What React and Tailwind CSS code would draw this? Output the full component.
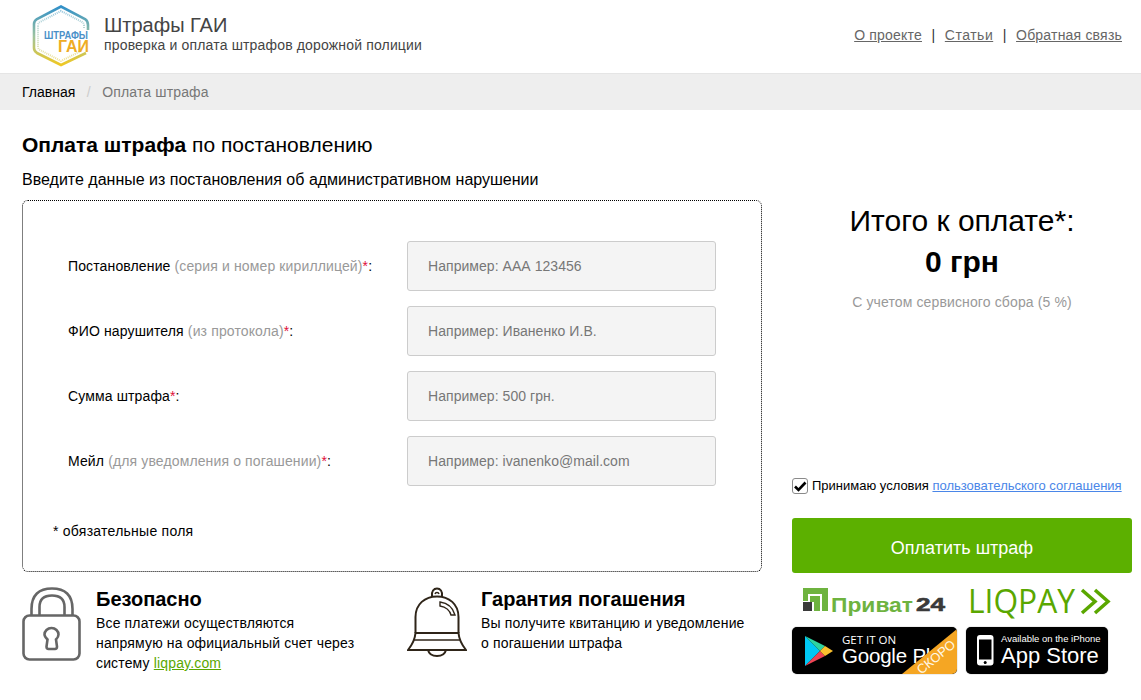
import React from 'react';

const fields = [
  { label: 'Постановление', hint: ' (серия и номер кириллицей)', ph: 'Например: ААА 123456' },
  { label: 'ФИО нарушителя', hint: ' (из протокола)', ph: 'Например: Иваненко И.В.' },
  { label: 'Сумма штрафа', hint: '', ph: 'Например: 500 грн.' },
  { label: 'Мейл', hint: ' (для уведомления о погашении)', ph: 'Например: ivanenko@mail.com' },
];

const Logo = () => (
  <svg width="60" height="64" viewBox="0 0 60 64" className="shrink-0">
    <defs>
      <linearGradient id="hex" gradientUnits="userSpaceOnUse" x1="0" y1="2" x2="0" y2="62">
        <stop offset="0" stopColor="#2f8fc9" />
        <stop offset="0.5" stopColor="#9cc3a0" />
        <stop offset="1" stopColor="#f2c81e" />
      </linearGradient>
    </defs>
    <path d="M56 26 V21 Q56 17 53 15 L29 2.5 L5 15 Q2 17 2 20 V44 Q2 47 5 49 L29 61 L54 49" fill="none" stroke="url(#hex)" strokeWidth="2.6" />
    <path d="M52 24 V22 Q52 19 50 18 L29 7 L8 18 Q6 19 6 22 V42 Q6 45 8 46 L29 57 L50 46.5" fill="none" stroke="url(#hex)" strokeWidth="2" strokeDasharray="1 1" opacity="0.55" />
    <text x="12" y="35" fontSize="11" fontWeight="700" fill="#4a90c8" textLength="44" lengthAdjust="spacingAndGlyphs" fontFamily="Liberation Sans, sans-serif">ШТРАФЫ</text>
    <text x="26" y="48" fontSize="16.5" fontWeight="700" fill="#eeac24" textLength="31" lengthAdjust="spacingAndGlyphs" fontFamily="Liberation Sans, sans-serif">ГАИ</text>
  </svg>
);

const LockIcon = () => (
  <svg width="60" height="74" viewBox="0 0 60 74" fill="none" stroke="#666" strokeWidth="2.6" className="shrink-0">
    <rect x="1.5" y="28.5" width="56" height="44" rx="6" />
    <path d="M9.5 28 V22 C9.5 8 17 1.5 30 1.5 C43 1.5 50.5 8 50.5 22 V28" />
    <path d="M17.5 28.5 V20 C17.5 12 22 8.5 30 8.5 C38 8.5 42.5 12 42.5 20 V28.5" />
    <path d="M29.5 41 C33.5 41 36.5 44 36.5 47.5 C36.5 49.5 35.5 51 34 52.5 L35 59.5 Q35 62 33 62 H26.5 Q24.5 62 24.5 59.5 L25.5 52.5 C24 51 22.5 49.5 22.5 47.5 C22.5 44 25.5 41 29.5 41 Z" />
  </svg>
);

const BellIcon = () => (
  <svg width="60" height="70" viewBox="0 0 60 70" fill="none" stroke="#2f2519" strokeWidth="2" className="shrink-0">
    <path d="M25 10 C24 4 27 1.5 30 1.5 C33 1.5 36 4 35 10" />
    <path d="M28 7 C28.5 5 31.5 5 32 7" strokeWidth="1.4" />
    <path d="M8.5 46 V30 C8.5 17 18 9.5 30 9.5 C42 9.5 51.5 17 51.5 30 V46" />
    <path d="M8.5 46 C8 52 5 58 1 63 H59 C55 58 52 52 51.5 46 Z" />
    <path d="M8.5 46 H51.5 M7 53 H53" strokeWidth="1.4" />
    <path d="M21 63 C23 71 37 71 39 63" />
    <path d="M33 15 C41 16 46 21 48 28 H44 C43 24 39 20 33 19 Z" strokeWidth="1.4" />
  </svg>
);

const PrivatLogo = () => (
  <svg width="146" height="30" viewBox="0 0 146 30" className="shrink-0">
    <path d="M1 1 H26 V24 H20 V7 H6 V14 H1 Z" fill="#6eb33f" />
    <path d="M8 9 H18 V24 H12 V15 H8 Z" fill="#6eb33f" />
    <rect x="1" y="15" width="9" height="9" fill="#3a3a3a" />
    <text x="29" y="25" fontSize="20" fontWeight="700" fill="#6eb33f" textLength="82" lengthAdjust="spacingAndGlyphs" fontFamily="Liberation Sans, sans-serif">Приват</text>
    <text x="114" y="24" fontSize="19" fontWeight="700" fill="#3a3a3a" stroke="#3a3a3a" strokeWidth="0.6" textLength="29" lengthAdjust="spacingAndGlyphs" fontFamily="Liberation Sans, sans-serif">24</text>
  </svg>
);

const LiqpayLogo = () => (
  <svg width="142" height="32" viewBox="0 0 142 32" className="shrink-0">
    <text x="-2" y="26" fontSize="33" fill="#5aa700" textLength="107" lengthAdjust="spacingAndGlyphs" fontFamily="Open Sans, sans-serif">LIQPAY</text>
    <path d="M112 3 L125 14.5 L112 26 M125 3 L138 14.5 L125 26" fill="none" stroke="#5aa700" strokeWidth="3.5" />
  </svg>
);

const GooglePlayBadge = () => (
  <div className="relative w-[165px] h-[47px] bg-black rounded-[5px] overflow-hidden shrink-0 shadow-[0_0_1px_#555]">
    <svg width="30" height="32" viewBox="0 0 30 32" className="absolute left-[12px] top-[8px]">
      <path d="M1 1 L16 16 L1 31 Z" fill="#00c8f5" />
      <path d="M1 1 L21 11 L16 16 Z" fill="#2ed4a0" />
      <path d="M1 31 L21 21 L16 16 Z" fill="#ef4454" />
      <path d="M21 11 L29 16 L21 21 L16 16 Z" fill="#fbc02d" />
    </svg>
    <div className="absolute left-[50px] top-[6px] text-[11.5px] leading-[14px] text-white font-['Open_Sans',sans-serif]">GET IT ON</div>
    <div className="absolute left-[50px] top-[15px] text-[20.5px] leading-[27px] text-white whitespace-nowrap tracking-[-0.2px]">Google Pl</div>
    <svg width="165" height="47" viewBox="0 0 165 47" className="absolute left-0 top-0">
      <path d="M110 47 L165 2 V47 Z" fill="#f5a623" />
    </svg>
    <div className="absolute left-[144px] top-[30px] -translate-x-1/2 -translate-y-1/2 -rotate-[39deg] text-[13px] leading-[15px] text-[#fff8e8]">СКОРО</div>
  </div>
);

const AppStoreBadge = () => (
  <div className="relative w-[142px] h-[47px] bg-black rounded-[5px] overflow-hidden shrink-0 shadow-[0_0_1px_#555]">
    <svg width="17" height="31" viewBox="0 0 17 31" className="absolute left-[11px] top-[8px]">
      <rect x="0" y="0" width="16.5" height="30.5" rx="3" fill="#fff" />
      <rect x="2" y="4.5" width="12.5" height="20" fill="#000" />
      <circle cx="8.2" cy="27.5" r="1.5" fill="#000" />
    </svg>
    <div className="absolute left-[35px] top-[6px] text-[9.5px] leading-[12px] text-white whitespace-nowrap">Available on the iPhone</div>
    <div className="absolute left-[35px] top-[15px] text-[22px] leading-[28px] text-white whitespace-nowrap">App Store</div>
  </div>
);

const App = () => (
  <div className="h-[700px] overflow-hidden bg-white text-black font-['Liberation_Sans',Arial,sans-serif]">
    {/* Header */}
    <header className="h-[74px] border-b border-[#e5e5e5] flex items-start pl-[32px] pr-[19px]">
      <div className="pt-[4px] mr-[12px]"><Logo /></div>
      <div className="pt-[14px] text-[#444]">
        <div className="text-[20px] leading-[23px]">Штрафы ГАИ</div>
        <div className="text-[14px] leading-[17px] tracking-[0.16px]">проверка и оплата штрафов дорожной полиции</div>
      </div>
      <nav className="ml-auto pt-[27px] flex text-[14px] leading-[16px] text-[#666] tracking-[0.2px]">
        <a className="underline">О проекте</a>
        <span className="mx-[9.5px] text-[#333]">|</span>
        <a className="underline tracking-[0.5px]">Статьи</a>
        <span className="mx-[9.5px] text-[#333]">|</span>
        <a className="underline">Обратная связь</a>
      </nav>
    </header>

    {/* Breadcrumb */}
    <div className="h-[36px] bg-[#eee] flex items-center pl-[22px] text-[14px]">
      <span>Главная</span>
      <span className="mx-[11.5px] text-[#ccc]">/</span>
      <span className="text-[#777] tracking-[0.15px]">Оплата штрафа</span>
    </div>

    <main className="flex pl-[22px] pr-[9px] pt-[23px] gap-[30px]">
      {/* Left column */}
      <div className="w-[740px] shrink-0">
        <h1 className="text-[21px] leading-[24px]"><b>Оплата штрафа</b> по постановлению</h1>
        <p className="text-[16px] leading-[18px] mt-[14px]">Введите данные из постановления об административном нарушении</p>
        <div className="mt-[11px] h-[372px] border border-dotted border-black rounded-[6px] pt-[40px] pl-[45px] pr-[45px]">
          <div className="flex flex-col gap-[15px]">
            {fields.map((f) => (
              <div key={f.label} className="flex items-center h-[50px]">
                <label className="w-[339px] shrink-0 text-[14px] tracking-[0.13px]">
                  {f.label}
                  <span className="text-[#999]">{f.hint}</span>
                  <span className="text-[#e0103a]">*</span>:
                </label>
                <div className="w-[309px] h-[50px] bg-[#f4f4f4] border border-[#ccc] rounded-[3px] pl-[20px] flex items-center text-[14px] text-[#777] tracking-[0.05px]">
                  {f.ph}
                </div>
              </div>
            ))}
          </div>
          <div className="text-[14px] leading-[16px] mt-[37px] ml-[-15px] tracking-[0.25px]">* обязательные поля</div>
        </div>
        <div className="flex mt-[15px]">
          <div className="w-[385px] flex shrink-0">
            <LockIcon />
            <div className="ml-[14px] mt-[1px]">
              <div className="text-[20px] leading-[23px] font-bold">Безопасно</div>
              <p className="text-[14px] leading-[20px] mt-[2px] tracking-[0.15px] whitespace-nowrap">
                Все платежи осуществляются<br />
                напрямую на официальный счет через<br />
                систему{' '}
                <a className="text-[#5aa700] underline">liqpay.com</a>
              </p>
            </div>
          </div>
          <div className="flex">
            <BellIcon />
            <div className="ml-[14px] mt-[1px]">
              <div className="text-[20px] leading-[23px] font-bold">Гарантия погашения</div>
              <p className="text-[14px] leading-[20px] mt-[2px] tracking-[0.15px] whitespace-nowrap">
                Вы получите квитанцию и уведомление<br />
                о погашении штрафа
              </p>
            </div>
          </div>
        </div>
      </div>

      {/* Right column */}
      <div className="w-[340px] shrink-0 pt-[67px]">
        <div className="text-center">
          <div className="text-[30px] leading-[41px]">Итого к оплате*:</div>
          <div className="text-[30px] leading-[42px] font-bold">0 грн</div>
          <div className="text-[14px] leading-[16px] text-[#999] mt-[11px] tracking-[0.13px]">С учетом сервисного сбора (5 %)</div>
        </div>
        <label className="flex items-center mt-[168px] h-[16px] text-[13px]">
          <span className="relative w-[16px] h-[16px] mr-[4px] shrink-0">
            <input type="checkbox" defaultChecked className="appearance-none block w-[16px] h-[16px] bg-white border border-[#8a8a8a] rounded-[3px]" />
            <svg width="14" height="14" viewBox="0 0 14 14" className="absolute left-[1px] top-[1px] pointer-events-none">
              <path d="M2 7.5 L5.5 11 L12.5 3.5" fill="none" stroke="#000" strokeWidth="2.6" />
            </svg>
          </span>
          <span>Принимаю условия <a className="text-[#4a86e8] underline">пользовательского соглашения</a></span>
        </label>
        <button className="mt-[24px] w-full h-[55px] pt-[6px] bg-[#5cb000] rounded-[3px] text-white text-[18px]">Оплатить штраф</button>
        <div className="flex items-start mt-[14px] pl-[10px] gap-[22px] h-[26px]">
          <PrivatLogo />
          <LiqpayLogo />
        </div>
        <div className="flex mt-[14px] gap-[9px]">
          <GooglePlayBadge />
          <AppStoreBadge />
        </div>
      </div>
    </main>
  </div>
);

export default App;
